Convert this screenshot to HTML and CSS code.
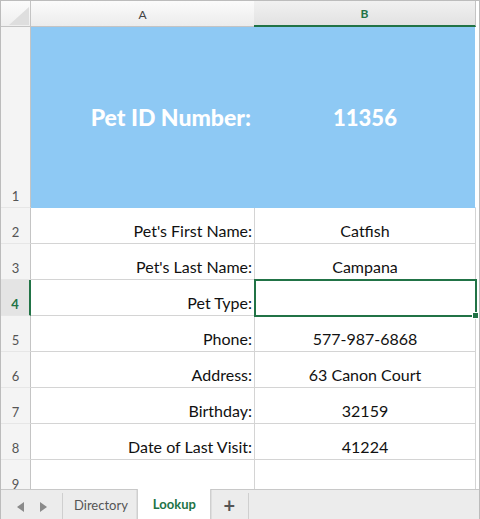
FILE: index.html
```html
<!DOCTYPE html>
<html>
<head>
<meta charset="utf-8">
<link rel="stylesheet" href="styles.css">
</head>
<body>
<div class="frame">
  <div class="sheet">
    <div class="grid">
      <div class="corner"><svg width="29" height="25" viewBox="0 0 29 25"><polygon points="8,24 28,24 28,6" fill="#dedede"/></svg></div>
      <div class="colhead">A</div>
      <div class="colhead sel">B</div>

      <div class="rowhead r1">1</div>
      <div class="cell blue label big">Pet ID Number:</div>
      <div class="cell blue value big">11356</div>

      <div class="rowhead">2</div>
      <div class="cell label">Pet's First Name:</div>
      <div class="cell value">Catfish</div>

      <div class="rowhead">3</div>
      <div class="cell label">Pet's Last Name:</div>
      <div class="cell value">Campana</div>

      <div class="rowhead selrow">4</div>
      <div class="cell label">Pet Type:</div>
      <div class="cell value active"></div>

      <div class="rowhead">5</div>
      <div class="cell label">Phone:</div>
      <div class="cell value">577-987-6868</div>

      <div class="rowhead">6</div>
      <div class="cell label">Address:</div>
      <div class="cell value">63 Canon Court</div>

      <div class="rowhead">7</div>
      <div class="cell label">Birthday:</div>
      <div class="cell value">32159</div>

      <div class="rowhead">8</div>
      <div class="cell label">Date of Last Visit:</div>
      <div class="cell value">41224</div>

      <div class="rowhead">9</div>
      <div class="cell label"></div>
      <div class="cell value"></div>
    </div>
  </div>
  <div class="tabbar">
    <div class="nav">
      <svg width="8" height="10" viewBox="0 0 8 10"><polygon points="7,0 7,10 0,5" fill="#8a8a8a"/></svg>
      <svg width="8" height="10" viewBox="0 0 8 10"><polygon points="1,0 1,10 8,5" fill="#8a8a8a"/></svg>
    </div>
    <div class="tab">Directory</div>
    <div class="tab current">Lookup</div>
    <div class="add">+</div>
    <div class="rest"></div>
  </div>
</div>
</body>
</html>
```
FILE: styles.css
```css
* { box-sizing: border-box; }
html, body { margin: 0; padding: 0; background: #fff; }
body { font-family: Lato, "Open Sans", sans-serif; }

.frame {
  width: 480px;
  height: 519px;
  border: 1px solid #bcbcbc;
  display: flex;
  flex-direction: column;
  background: #fff;
}

.sheet {
  height: 488px;
  overflow: hidden;
  flex: none;
}

.grid {
  display: grid;
  grid-template-columns: 30px 224px 221px;
  grid-template-rows: 26px 181px repeat(8, 36px);
}

.corner {
  background: linear-gradient(#fbfbfb, #efefef);
  border-right: 1px solid #c4c4c4;
  border-bottom: 1px solid #c4c4c4;
}
.corner svg { display: block; }

.colhead {
  background: linear-gradient(#fbfbfb, #ececec);
  border-right: 1px solid #d4d4d4;
  border-bottom: 1px solid #c4c4c4;
  font-size: 12px;
  color: #444;
  display: flex;
  align-items: center;
  justify-content: center;
  padding-top: 1px;
}
.colhead.sel {
  background: linear-gradient(#f1f1f1, #e2e2e2);
  color: #217346;
  font-weight: bold;
  border-bottom: 2px solid #217346;
  border-right: 1px solid #c4c4c4;
  margin-left: -1px;
}

.rowhead {
  background: #f4f4f4;
  border-right: 1px solid #c4c4c4;
  border-bottom: 1px solid #e6e6e6;
  font-size: 13px;
  color: #555;
  display: flex;
  align-items: flex-end;
  justify-content: center;
  padding-bottom: 3px;
}
.rowhead.selrow {
  background: #e4e4e4;
  color: #217346;
  font-weight: bold;
  border-right: 2px solid #217346;
}

.cell {
  border-right: 1px solid #d4d4d4;
  border-bottom: 1px solid #d4d4d4;
  font-size: 16px;
  color: #111;
  display: flex;
  align-items: flex-end;
  padding-bottom: 3px;
}
.cell.label { justify-content: flex-end; padding-right: 2px; }
.cell.value { justify-content: center; }

.cell.blue {
  background: #8ec9f4;
  border-bottom-color: #8ec9f4;
  align-items: center;
  padding-bottom: 0;
  color: #fff;
  font-weight: 900;
  font-size: 23px;
}
.cell.blue.value { font-size: 22px; }
.cell.blue.label { border-right-color: #8ec9f4; padding-right: 3px; }
.cell.blue.value { border-right-color: #fff; }

.cell.active {
  position: relative;
  z-index: 2;
  outline: 2px solid #217346;
  outline-offset: -1px;
}
.cell.active::after {
  content: "";
  position: absolute;
  right: -3px;
  bottom: -3px;
  width: 5px;
  height: 5px;
  background: #217346;
  box-shadow: 0 0 0 1px #fff;
}

.tabbar {
  flex: 1;
  background: #ececec;
  border-top: 1px solid #c8c8c8;
  display: flex;
  align-items: stretch;
  font-size: 13px;
}
.nav {
  width: 62px;
  display: flex;
  align-items: center;
  justify-content: center;
  gap: 14px;
  border-right: 1px solid #cfcfcf;
  margin: 3px 0 5px 0;
  padding-bottom: 2px;
}
.tab {
  display: flex;
  align-items: center;
  padding: 0 9px 9px 11px;
  color: #555;
}
.tab.current {
  background: #fff;
  color: #217346;
  font-weight: bold;
  margin-top: -1px;
  margin-bottom: 5px;
  padding: 0 14px 5px 15px;
  border-left: 1px solid #cfcfcf;
  border-right: 1px solid #cfcfcf;
  box-shadow: 0 1px 1px #9a9a9a;
}
.add {
  width: 38px;
  display: flex;
  align-items: center;
  justify-content: center;
  font-size: 20px;
  font-weight: bold;
  color: #555;
  border-right: 1px solid #cfcfcf;
  margin: 3px 0 5px 0;
  padding-bottom: 6px;
}
.rest { flex: 1; }
```
